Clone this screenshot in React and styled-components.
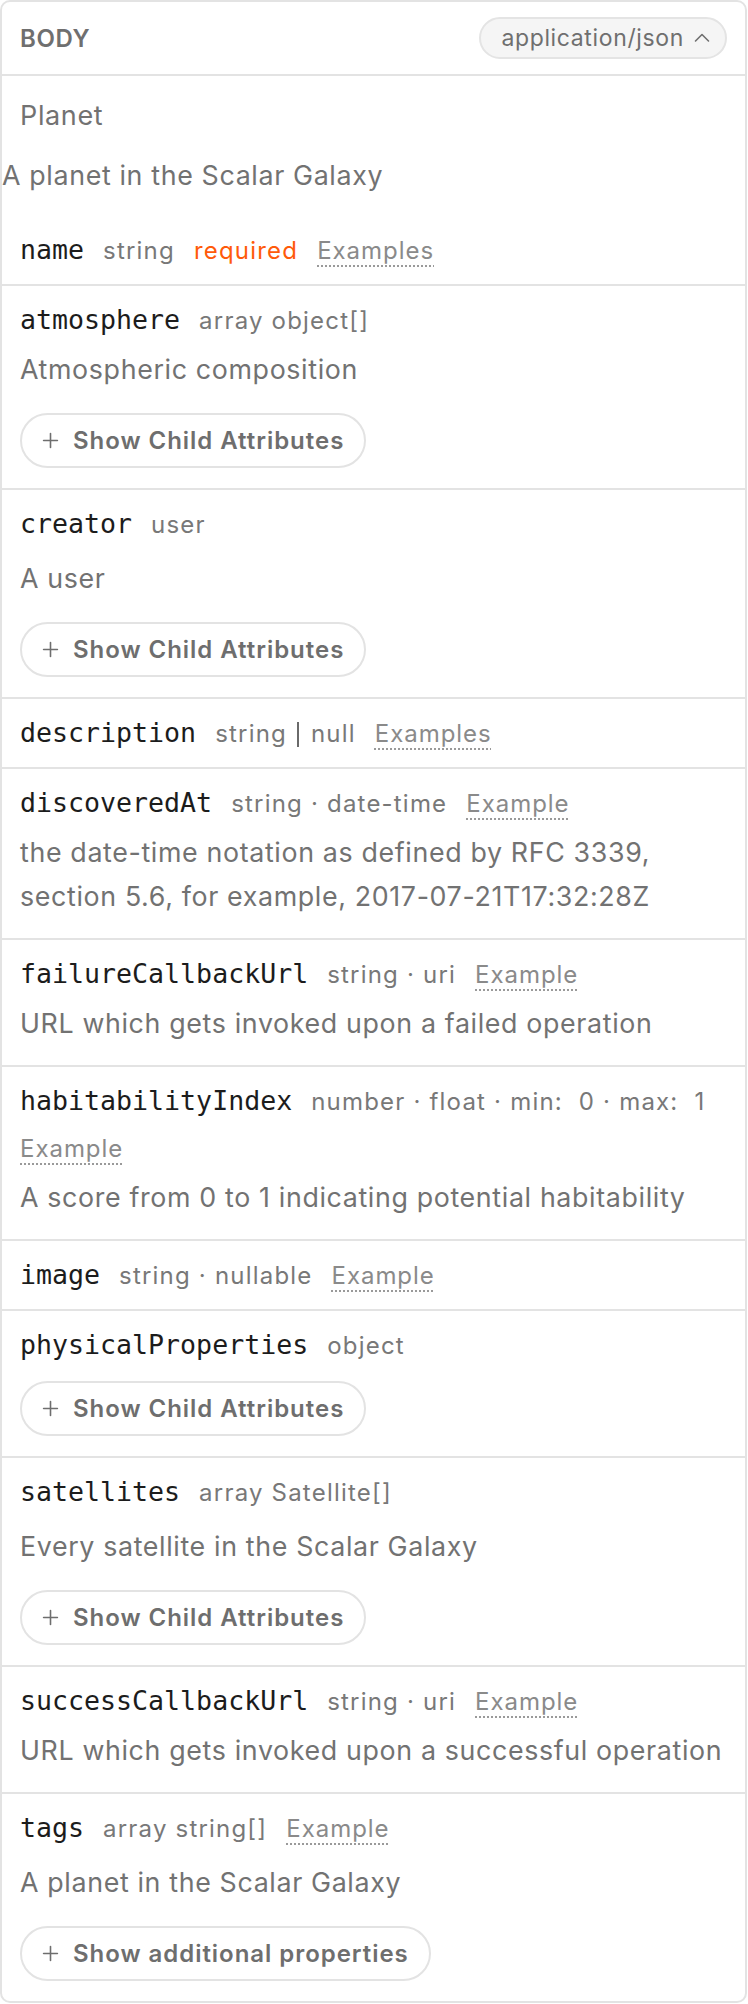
import styled, { createGlobalStyle } from 'styled-components'

const GlobalStyle = createGlobalStyle`
  html, body {
    margin: 0;
    padding: 0;
    background: #ffffff;
  }
  body {
    font-family: Inter, "Liberation Sans", sans-serif;
    letter-spacing: 0.04em;
    -webkit-font-smoothing: antialiased;
  }
`

const properties = [
  {
    name: 'atmosphere',
    type: 'array object[]',
    description: 'Atmospheric composition',
    button: 'Show Child Attributes',
  },
  {
    name: 'creator',
    type: 'user',
    description: 'A user',
    loose: true,
    button: 'Show Child Attributes',
  },
  { name: 'description', type: 'string', orNull: true, example: 'Examples' },
  {
    name: 'discoveredAt',
    type: 'string · date-time',
    example: 'Example',
    description:
      'the date-time notation as defined by RFC 3339, section 5.6, for example, 2017-07-21T17:32:28Z',
  },
  {
    name: 'failureCallbackUrl',
    type: 'string · uri',
    example: 'Example',
    description: 'URL which gets invoked upon a failed operation',
  },
  {
    name: 'habitabilityIndex',
    type: 'number · float · min:  0 · max:  1',
    example: 'Example',
    description: 'A score from 0 to 1 indicating potential habitability',
  },
  { name: 'image', type: 'string · nullable', example: 'Example' },
  { name: 'physicalProperties', type: 'object', button: 'Show Child Attributes' },
  {
    name: 'satellites',
    type: 'array Satellite[]',
    description: 'Every satellite in the Scalar Galaxy',
    loose: true,
    button: 'Show Child Attributes',
  },
  {
    name: 'successCallbackUrl',
    type: 'string · uri',
    example: 'Example',
    description: 'URL which gets invoked upon a successful operation',
  },
  {
    name: 'tags',
    type: 'array string[]',
    example: 'Example',
    description: 'A planet in the Scalar Galaxy',
    loose: true,
    button: 'Show additional properties',
  },
]

function PlusIcon() {
  return (
    <svg width="17" height="17" viewBox="0 0 16 16" fill="none" stroke="currentColor" strokeWidth="1.5" strokeLinecap="round">
      <path d="M8 1.5v13M1.5 8h13" />
    </svg>
  )
}

function ChevronUp() {
  return (
    <svg width="18" height="18" viewBox="0 0 18 18" fill="none" stroke="currentColor" strokeWidth="1.6" strokeLinecap="round" strokeLinejoin="round">
      <path d="M2.5 12L9 5.5l6.5 6.5" />
    </svg>
  )
}

function Property({ item, first }) {
  const endsWith = item.button ? 'button' : item.description ? 'text' : 'head'
  return (
    <Row $first={first} $end={endsWith}>
      <HeadLine>
        <PropName>{item.name}</PropName>
        <TypeText>
          {item.type}
          {item.orNull && (
            <>
              <Bar />
              null
            </>
          )}
        </TypeText>
        {item.required && <Required>required</Required>}
        {item.example && <ExampleLink>{item.example}</ExampleLink>}
      </HeadLine>
      {item.description && <Description $loose={item.loose}>{item.description}</Description>}
      {item.button && (
        <ChildButton $afterText={!!item.description}>
          <PlusIcon />
          {item.button}
        </ChildButton>
      )}
    </Row>
  )
}

function App() {
  return (
    <>
      <GlobalStyle />
      <Card>
        <Header>
          <HeaderTitle>Body</HeaderTitle>
          <ContentPill>
            application/json
            <ChevronUp />
          </ContentPill>
        </Header>
        <Schema>
          <SchemaTitle>Planet</SchemaTitle>
          <SchemaDescription>A planet in the Scalar Galaxy</SchemaDescription>
          <Property first item={{ name: 'name', type: 'string', required: true, example: 'Examples' }} />
        </Schema>
        {properties.map((item) => (
          <Property key={item.name} item={item} />
        ))}
      </Card>
    </>
  )
}

const Card = styled.div`
  width: 747px;
  box-sizing: border-box;
  border: 2px solid #e3e3e3;
  border-radius: 10px;
  overflow: hidden;
`
const Header = styled.div`
  height: 72px;
  padding: 0 18px 0 18px;
  display: flex;
  align-items: center;
  justify-content: space-between;
  border-bottom: 2px solid #e3e3e3;
`
const HeaderTitle = styled.div`
  font-size: 24px;
  font-weight: 600;
  text-transform: uppercase;
  color: #6f6f6f;
`
const ContentPill = styled.div`
  height: 42px;
  box-sizing: border-box;
  display: flex;
  align-items: center;
  gap: 9px;
  padding: 0 14px 0 20px;
  border: 2px solid #e4e4e4;
  border-radius: 999px;
  background: #f5f5f5;
  font-size: 23px;
  color: #6f6f6f;
`
const Schema = styled.div`
  padding-top: 22px;
`
const SchemaTitle = styled.div`
  padding: 0 18px;
  font-size: 27px;
  line-height: 36px;
  color: #727272;
`
const SchemaDescription = styled.div`
  margin-top: 18px;
  font-size: 26.8px;
  line-height: 47px;
  color: #727272;
`
const rowBottom = { button: '20px', text: '20px', head: '15px' }
const Row = styled.div`
  padding: ${(p) => (p.$first ? '33px' : '16px')} 18px ${(p) => (p.$first ? '15px' : rowBottom[p.$end])};
  border-top: ${(p) => (p.$first ? 'none' : '2px solid #e3e3e3')};
`
const HeadLine = styled.div`
  display: flex;
  flex-wrap: wrap;
  align-items: baseline;
  column-gap: 19px;
  row-gap: 11px;
  line-height: 36px;
`
const PropName = styled.span`
  font-family: "DejaVu Sans Mono", "Liberation Mono", monospace;
  font-size: 26.6px;
  letter-spacing: 0;
  color: #1c1c1c;
`
const TypeText = styled.span`
  font-size: 24px;
  letter-spacing: 0.05em;
  color: #787878;
  white-space: pre;
  display: inline-flex;
  align-items: center;
`
const Bar = styled.span`
  display: inline-block;
  width: 2px;
  height: 25px;
  margin: 0 12px 0 10px;
  background: #6a6a6a;
`
const Required = styled.span`
  font-size: 24px;
  letter-spacing: 0.05em;
  color: #ff5a0a;
`
const ExampleLink = styled.span`
  font-size: 24px;
  letter-spacing: 0.04em;
  color: #8a8a8a;
  text-decoration: underline dotted #9a9a9a;
  text-decoration-thickness: 2px;
  text-underline-offset: 6px;
`
const Description = styled.div`
  margin-top: ${(p) => (p.$loose ? '13px' : '8px')};
  font-size: 26.8px;
  line-height: 44px;
  color: #727272;
`
const ChildButton = styled.button`
  margin-top: ${(p) => (p.$afterText ? '22px' : '17px')};
  height: 55px;
  box-sizing: border-box;
  display: flex;
  align-items: center;
  gap: 14px;
  padding: 0 20px 0 20px;
  border: 2px solid #e3e3e3;
  border-radius: 999px;
  background: #ffffff;
  font-family: Inter, "Liberation Sans", sans-serif;
  font-size: 24px;
  font-weight: 600;
  letter-spacing: 0.04em;
  color: #6e6e6e;
`

export default App
